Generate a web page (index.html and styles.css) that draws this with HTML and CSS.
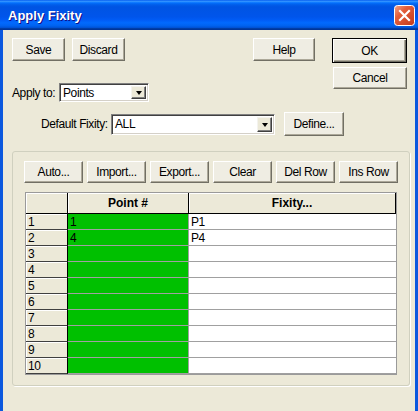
FILE: index.html
```html
<!DOCTYPE html>
<html>
<head>
<meta charset="utf-8">
<title>Apply Fixity</title>
<link rel="stylesheet" href="styles.css">
</head>
<body>
<div class="window">
  <div class="titlebar">
    <span class="title">Apply Fixity</span>
    <span class="close" aria-label="Close">
      <svg width="21" height="21" viewBox="0 0 21 21">
        <defs>
          <linearGradient id="cg" x1="0" y1="0" x2="1" y2="1">
            <stop offset="0" stop-color="#F2A58A"/>
            <stop offset="0.35" stop-color="#E35E3B"/>
            <stop offset="1" stop-color="#C2391A"/>
          </linearGradient>
        </defs>
        <rect x="0.5" y="0.5" width="20" height="20" rx="3" fill="url(#cg)" stroke="#fff"/>
        <path d="M6 6 L15 15 M15 6 L6 15" stroke="#fff" stroke-width="2.2" stroke-linecap="square"/>
      </svg>
    </span>
  </div>
  <div class="client">
    <div class="top">
      <div class="left">
        <div class="btnrow">
          <button class="btn btn-save">Save</button>
          <button class="btn btn-discard">Discard</button>
          <button class="btn btn-help">Help</button>
        </div>
        <div class="apply-row">
          <span class="apply-label">Apply to:</span>
          <div class="combo combo-apply">
            <span class="combo-text">Points</span>
            <span class="combo-arrow"><span class="tri"></span></span>
          </div>
        </div>
      </div>
      <div class="right">
        <button class="btn btn-ok">OK</button>
        <button class="btn btn-cancel">Cancel</button>
      </div>
    </div>
    <div class="fixity-row">
      <span class="fixity-label">Default Fixity:</span>
      <div class="combo combo-fixity">
        <span class="combo-text">ALL</span>
        <span class="combo-arrow"><span class="tri"></span></span>
      </div>
      <button class="btn btn-define">Define...</button>
    </div>
    <div class="group">
      <div class="toolrow">
        <button class="btn tbtn">Auto...</button>
        <button class="btn tbtn">Import...</button>
        <button class="btn tbtn">Export...</button>
        <button class="btn tbtn">Clear</button>
        <button class="btn tbtn">Del Row</button>
        <button class="btn tbtn">Ins Row</button>
      </div>
      <div class="grid">
        <div class="hcell corner"></div>
        <div class="hcell">Point #</div>
        <div class="hcell">Fixity...</div>

        <div class="rh">1</div><div class="pt">1</div><div class="fx">P1</div>
        <div class="rh">2</div><div class="pt">4</div><div class="fx">P4</div>
        <div class="rh">3</div><div class="pt"></div><div class="fx"></div>
        <div class="rh">4</div><div class="pt"></div><div class="fx"></div>
        <div class="rh">5</div><div class="pt"></div><div class="fx"></div>
        <div class="rh">6</div><div class="pt"></div><div class="fx"></div>
        <div class="rh">7</div><div class="pt"></div><div class="fx"></div>
        <div class="rh">8</div><div class="pt"></div><div class="fx"></div>
        <div class="rh">9</div><div class="pt"></div><div class="fx"></div>
        <div class="rh">10</div><div class="pt"></div><div class="fx"></div>
      </div>
    </div>
  </div>
</div>
</body>
</html>
```
FILE: styles.css
```css
* { box-sizing: border-box; }

body {
  margin: 0;
  background: #ECE9D8;
  font-family: "Liberation Sans", Arial, sans-serif;
  font-size: 12px;
  letter-spacing: -0.4px;
  color: #000;
}

.window {
  width: 418px;
  height: 411px;
  display: flex;
  flex-direction: column;
  overflow: hidden;
  background: #ECE9D8;
}

.titlebar {
  height: 30px;
  flex: none;
  display: flex;
  align-items: center;
  justify-content: space-between;
  padding: 0 3px 0 8px;
  background: linear-gradient(180deg, #0058EE 0%, #3593FF 4%, #288EFF 6%, #127DFF 8%, #036FFC 10%, #0262EE 14%, #0057E5 20%, #0054E3 24%, #0055EB 56%, #005BF5 66%, #026AFE 76%, #0062EF 86%, #0052D6 92%, #0040AB 94%, #003092 100%);
}

.title {
  color: #fff;
  font-weight: bold;
  font-size: 13px;
  letter-spacing: 0;
  text-shadow: 1px 1px 0 #0F1089;
}

.close {
  display: flex;
  width: 21px;
  height: 21px;
}

.client {
  flex: 1;
  border-left: 3px solid #0B58DE;
  border-right: 3px solid #0B58DE;
  padding: 8px 0 0 9px;
}

.btn {
  font-family: inherit;
  font-size: 12px;
  letter-spacing: -0.4px;
  color: #000;
  height: 23px;
  padding: 0;
  background: #EFEDE3;
  border: 1px solid;
  border-color: #FFFFFF #716F64 #716F64 #FFFFFF;
  box-shadow: inset -1px -1px 0 #ACA899;
  display: flex;
  align-items: center;
  justify-content: center;
}

.top {
  display: flex;
}

.left {
  width: 303px;
}

.btnrow {
  display: flex;
}

.btn-save { width: 53px; }
.btn-discard { width: 53px; margin-left: 7px; }
.btn-help { width: 62px; margin-left: auto; }

.right {
  margin-left: 17px;
  display: flex;
  flex-direction: column;
  align-items: flex-end;
  width: 75px;
}

.btn-ok {
  width: 75px;
  height: 25px;
  border: 1px solid #000;
  box-shadow: inset 1px 1px 0 #fff, inset -1px -1px 0 #716F64, inset -2px -2px 0 #ACA899;
}

.btn-cancel {
  width: 74px;
  height: 22px;
  margin-top: 4px;
}

.apply-row {
  display: flex;
  align-items: center;
  margin-top: 22px;
}

.apply-label { width: 47px; }

.combo {
  display: flex;
  align-items: center;
  background: #fff;
  border: 1px solid;
  border-color: #808080 #FFFFFF #FFFFFF #808080;
  box-shadow: inset 1px 1px 0 #404040, inset -1px -1px 0 #D4D0C8;
  padding: 2px;
}

.combo-apply { width: 90px; height: 19px; }
.combo-fixity { width: 164px; height: 21px; }

.combo-text {
  flex: 1;
  padding-left: 1px;
}

.combo-arrow {
  width: 15px;
  align-self: stretch;
  background: #ECE9D8;
  border: 1px solid;
  border-color: #F4F3EE #404040 #404040 #F4F3EE;
  box-shadow: inset -1px -1px 0 #808080;
  display: flex;
  align-items: center;
  justify-content: center;
}

.tri {
  width: 0;
  height: 0;
  border-left: 3.5px solid transparent;
  border-right: 3.5px solid transparent;
  border-top: 4px solid #000;
  margin-top: 1px;
}

.fixity-row {
  display: flex;
  align-items: center;
  margin-top: 10px;
  padding-left: 29px;
}

.fixity-label { width: 70px; }

.btn-define {
  width: 60px;
  height: 24px;
  margin-left: 9px;
}

.group {
  margin-top: 15px;
  width: 398px;
  height: 235px;
  border: 1px solid #D0D0BF;
  border-radius: 3px;
  box-shadow: 1px 1px 0 #fff;
  padding: 9px 0 0 11px;
}

.toolrow {
  display: flex;
  gap: 4px;
}

.tbtn {
  width: 59px;
  height: 22px;
}

.grid {
  margin: 9px 0 0 1px;
  width: 372px;
  display: grid;
  grid-template-columns: 42px 121px 207px;
  grid-template-rows: 21px repeat(10, 16px);
  border: 1px solid #9A9A9A;
  background: #fff;
}

.hcell {
  background: #ECE9D8;
  border-right: 1px solid #000;
  border-bottom: 1px solid #000;
  box-shadow: inset 1px 1px 0 #fff;
  font-weight: bold;
  letter-spacing: 0;
  display: flex;
  align-items: center;
  justify-content: center;
}

.rh {
  background: #ECE9D8;
  border-right: 1px solid #000;
  border-bottom: 1px solid #404040;
  box-shadow: inset 1px 1px 0 #fff;
  padding-left: 2px;
  display: flex;
  align-items: center;
}

.pt, .fx {
  border-right: 1px solid #A0A0A0;
  border-bottom: 1px solid #A0A0A0;
  padding-left: 2px;
  display: flex;
  align-items: center;
}

.pt { background: #00C000; }
.fx { background: #fff; border-right: none; }
```
